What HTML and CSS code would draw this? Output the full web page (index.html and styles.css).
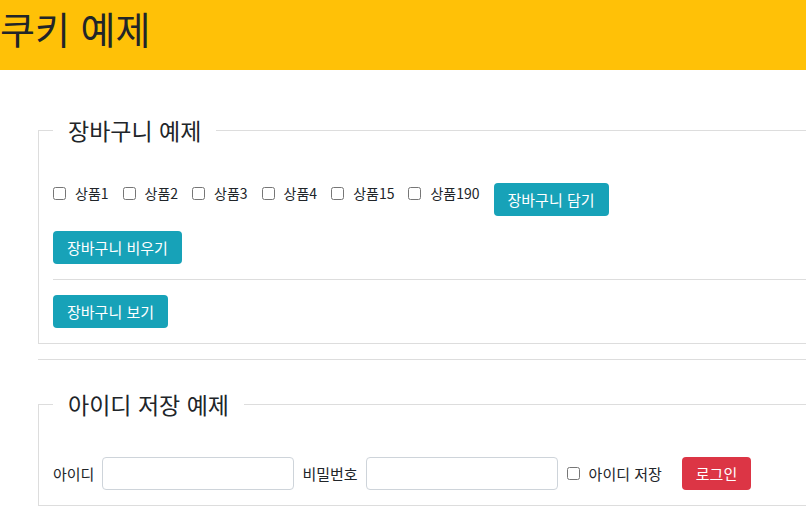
FILE: index.html
```html
<!doctype html>
<html lang="ko">
<head>
  <title>쿠키 예제</title>
  <meta charset="utf-8">
  <meta name="viewport" content="width=device-width, initial-scale=1">
  <link rel="stylesheet" href="styles.css">
</head>
<body>
  <header class="top">
    <h1>쿠키 예제</h1>
  </header>

  <div class="main">
    <fieldset class="box">
      <legend>장바구니 예제</legend>
      <form class="row cart" id="cartForm">
        <label class="check"><input type="checkbox" name="item" value="1">상품1</label>
        <label class="check"><input type="checkbox" name="item" value="2">상품2</label>
        <label class="check"><input type="checkbox" name="item" value="3">상품3</label>
        <label class="check"><input type="checkbox" name="item" value="4">상품4</label>
        <label class="check"><input type="checkbox" name="item" value="15">상품15</label>
        <label class="check"><input type="checkbox" name="item" value="190">상품190</label>
        <button type="button" class="btn btn-info">장바구니 담기</button>
      </form>
      <div class="row">
        <button type="button" class="btn btn-info">장바구니 비우기</button>
      </div>
      <hr class="line">
      <div class="row">
        <button type="button" class="btn btn-info">장바구니 보기</button>
      </div>
    </fieldset>

    <hr class="split">

    <fieldset class="box">
      <legend>아이디 저장 예제</legend>
      <form class="row login">
        <label for="userId">아이디</label>
        <input type="text" id="userId" class="field">
        <label for="userPw">비밀번호</label>
        <input type="password" id="userPw" class="field">
        <label class="check"><input type="checkbox" name="saveId">아이디 저장</label>
        <button type="button" class="btn btn-danger">로그인</button>
      </form>
    </fieldset>
  </div>
</body>
</html>
```

FILE: styles.css
```css
html {
  overflow: hidden;
}

body {
  margin: 0;
  font-family: "Noto Sans CJK KR", "Noto Sans", sans-serif;
  font-size: 15px;
  line-height: 21px;
  color: #212529;
  background: #ffffff;
}

.top {
  background-color: #ffc107;
  height: 70px;
  box-sizing: border-box;
  padding-top: 6px;
}

.top h1 {
  margin: 0;
  font-size: 38px;
  line-height: 44px;
  font-weight: 400;
}

.main {
  width: 1100px;
  padding: 44px 0 0 38px;
}

.box {
  margin: 0;
  border: 1px solid #dddddd;
  padding: 37px 14px 15px 14px;
}

.box legend {
  padding: 0 15px;
  font-size: 23px;
  line-height: 32px;
}

.row {
  display: flex;
  align-items: flex-start;
  margin: 0 0 15px 0;
}

.row:last-child {
  margin-bottom: 0;
}

.check {
  display: inline-flex;
  align-items: center;
  margin-right: 14px;
}

.cart .check {
  font-size: 14px;
}

.check input {
  width: 13px;
  height: 13px;
  margin: 0 9px 0 0;
}

.btn {
  height: 33px;
  padding: 0 14px;
  border: 0;
  border-radius: 4px;
  font-family: inherit;
  font-size: 15px;
  line-height: 33px;
  color: #ffffff;
}

.btn-info {
  background-color: #17a2b8;
}

.btn-danger {
  background-color: #dc3545;
}

.line {
  margin: 0 0 15px 0;
  border: 0;
  border-top: 1px solid #dddddd;
}

.split {
  margin: 15px 0 28px 0;
  border: 0;
  border-top: 1px solid #dddddd;
}

.login {
  align-items: center;
}

.login label {
  margin-right: 8px;
}

.field {
  width: 192px;
  height: 33px;
  box-sizing: border-box;
  border: 1px solid #ced4da;
  border-radius: 4px;
  margin-right: 8px;
}

.login .check {
  margin-left: 1px;
  margin-right: 20px;
}
```
